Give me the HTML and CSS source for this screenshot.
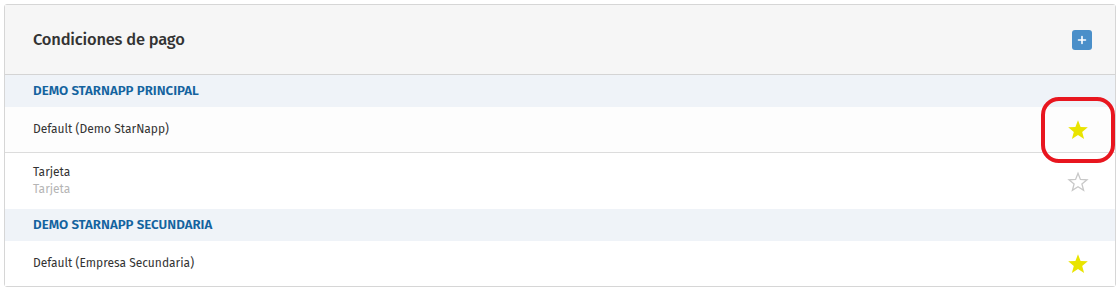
FILE: index.html
```html
<!DOCTYPE html>
<html lang="es">
<head>
<meta charset="utf-8">
<link rel="stylesheet" href="styles.css">
</head>
<body>
<div class="card">
  <div class="card-header">
    <h2 class="title">Condiciones de pago</h2>
    <button class="add-btn" aria-label="Agregar">
      <svg width="10" height="10" viewBox="0 0 10 10"><path d="M5 1.5v7M1.5 5h7" stroke="#fff" stroke-width="1.6" stroke-linecap="round"/></svg>
    </button>
  </div>
  <div class="group">DEMO STARNAPP PRINCIPAL</div>
  <div class="row row-a">
    <div class="row-text"><div class="name">Default (Demo StarNapp)</div></div>
    <span class="star-wrap">
      <svg class="star" width="24" height="24" viewBox="0 0 24 24"><path d="M12 2.2l2.6 6.7 7.2.4-5.6 4.6 1.9 7L12 17l-6.1 3.9 1.9-7-5.6-4.6 7.2-.4z" fill="#e9e400"/></svg>
      <span class="highlight"></span>
    </span>
  </div>
  <div class="row row-b">
    <div class="row-text"><div class="name">Tarjeta</div><div class="sub">Tarjeta</div></div>
    <svg class="star" width="24" height="24" viewBox="0 0 24 24"><path d="M12 3.3l2.4 6.1 6.6.4-5.1 4.2 1.7 6.4L12 16.8l-5.6 3.6 1.7-6.4-5.1-4.2 6.6-.4z" fill="none" stroke="#c8c8c8" stroke-width="1.3" stroke-linejoin="miter"/></svg>
  </div>
  <div class="group">DEMO STARNAPP SECUNDARIA</div>
  <div class="row row-c">
    <div class="row-text"><div class="name">Default (Empresa Secundaria)</div></div>
    <svg class="star" width="24" height="24" viewBox="0 0 24 24"><path d="M12 2.2l2.6 6.7 7.2.4-5.6 4.6 1.9 7L12 17l-6.1 3.9 1.9-7-5.6-4.6 7.2-.4z" fill="#e9e400"/></svg>
  </div>
</div>
</body>
</html>
```
FILE: styles.css
```css
* { box-sizing: border-box; }
body {
  margin: 0;
  padding: 4px 4px 0 4px;
  background: #fff;
  font-family: "Fira Sans", "Open Sans", "Noto Sans", sans-serif;
  color: #333;
  width: 1120px;
  height: 290px;
  overflow: hidden;
}
.card {
  width: 1112px;
  border: 1px solid #d6d6d6;
  border-radius: 3px;
  background: #fff;
}
.card-header {
  height: 70px;
  background: #f6f6f6;
  border-bottom: 1px solid #d4d4d4;
  display: flex;
  align-items: center;
  justify-content: space-between;
  padding: 0 23px 0 28px;
}
.title {
  margin: 0;
  font-size: 16.5px;
  font-weight: 500;
  color: #333;
  letter-spacing: -0.2px;
}
.add-btn {
  width: 20px;
  height: 20px;
  border: none;
  border-radius: 3px;
  background: #4a8fc9;
  padding: 0;
  display: flex;
  align-items: center;
  justify-content: center;
}
.group {
  height: 32px;
  background: #eff3f8;
  display: flex;
  align-items: center;
  padding-left: 28px;
  font-size: 13.3px;
  font-weight: 600;
  color: #14639f;
  letter-spacing: 0;
}
.row {
  display: flex;
  align-items: center;
  justify-content: space-between;
  padding: 0 25px 0 28px;
  background: #fff;
}
.row-a { height: 46px; border-bottom: 1px solid #dcdcdc; background: #fdfdfd; }
.row-b { height: 56px; }
.row-c { height: 45px; }
.name { font-size: 12px; color: #333; line-height: 17px; }
.sub { font-size: 12px; color: #b5b5b5; line-height: 17px; }
.star { display: block; }
.row-b .star { margin-top: 2px; }
.star-wrap { position: relative; display: block; }
.highlight {
  position: absolute;
  left: -25px;
  top: -21px;
  width: 74px;
  height: 66px;
  border: 4px solid #e8161f;
  border-radius: 18px;
}
```
